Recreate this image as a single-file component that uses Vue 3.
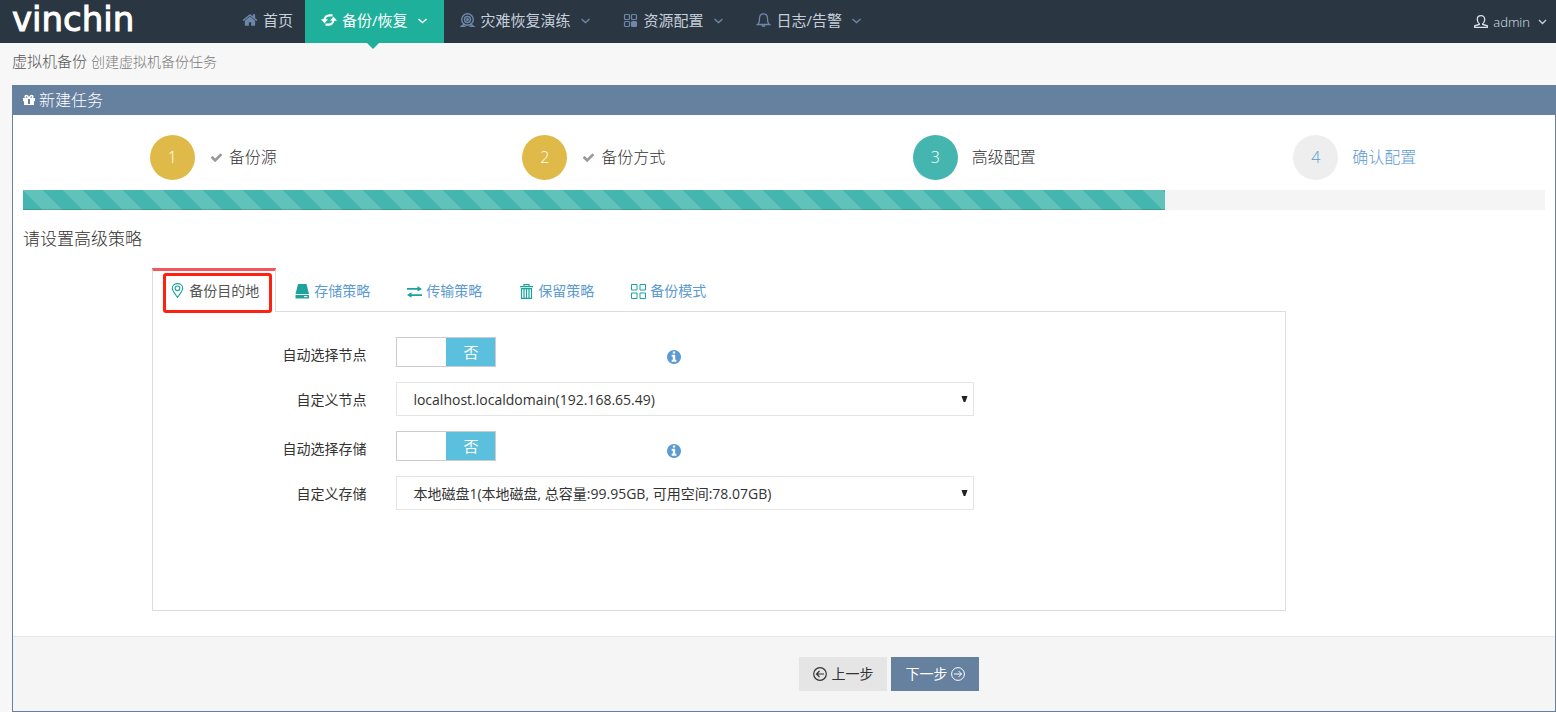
<script setup>
import { ref } from 'vue'

const menus = [
  { label: '首页', icon: 'home' },
  { label: '备份/恢复', icon: 'refresh', more: true, active: true },
  { label: '灾难恢复演练', icon: 'camera', more: true },
  { label: '资源配置', icon: 'blocks', more: true },
  { label: '日志/告警', icon: 'bell', more: true }
]

const steps = [
  { label: '备份源', state: 'done' },
  { label: '备份方式', state: 'done' },
  { label: '高级配置', state: 'active' },
  { label: '确认配置', state: 'todo' }
]
const progress = ref(75)

const tabs = [
  { label: '备份目的地', icon: 'pin' },
  { label: '存储策略', icon: 'disk' },
  { label: '传输策略', icon: 'transfer' },
  { label: '保留策略', icon: 'trash' },
  { label: '备份模式', icon: 'grid' }
]
const current = ref(0)

const autoNode = ref(false)
const autoStorage = ref(false)
</script>

<template>
  <div class="page">
    <header class="topbar">
      <a class="logo" href="#">vinchin</a>
      <nav class="menu">
        <a v-for="m in menus" :key="m.label" href="#" class="menu-item" :class="{ active: m.active }">
          <svg v-if="m.icon === 'home'" class="ico" viewBox="0 0 1792 1792"><path fill="currentColor" d="M1472 992v480q0 26-19 45t-45 19h-384v-384h-256v384h-384q-26 0-45-19t-19-45v-480q0-1 .5-3t.5-3l575-474 575 474q1 2 1 6zm223-69l-62 74q-8 9-21 11h-3q-13 0-21-7l-692-577-692 577q-12 8-24 7-13-2-21-11l-62-74q-8-10-7-23.5t11-21.5l719-599q32-26 76-26t76 26l244 204v-195q0-14 9-23t23-9h192q14 0 23 9t9 23v408l219 182q10 8 11 21.5t-7 23.5z" /></svg>
          <svg v-else-if="m.icon === 'refresh'" class="ico" viewBox="0 0 16 16" fill="none" stroke="currentColor" stroke-width="2.2"><path d="M3.500 8.500C3.500 5 6 3.400 8.600 3.400H11.500" /><path d="M12.500 7.500C12.500 11 10 12.600 7.400 12.600H4.500" /><path fill="currentColor" stroke="none" d="M0 7.200H7L3.500 11.500zM16 8.800H9L12.500 4.500z" /></svg>
          <svg v-else-if="m.icon === 'camera'" class="ico" viewBox="0 0 16 16" fill="none" stroke="currentColor" stroke-width="1.400"><circle cx="7.500" cy="7.500" r="5.800" /><circle cx="7.500" cy="7.500" r="3" /><circle cx="7.500" cy="7.500" r=".8" /><path d="M4 12.300L1.500 14.300H5.500M11 12.300L13.500 14.300H9.500" /></svg>
          <svg v-else-if="m.icon === 'blocks'" class="ico" viewBox="0 0 16 16" fill="none" stroke="currentColor" stroke-width="1.200"><rect x="1.500" y="2.500" width="5" height="5" rx="1" /><rect x="8.500" y="2.500" width="5" height="5" rx="1" /><rect x="1.500" y="9.500" width="5" height="5" rx="1" /><rect x="8.500" y="9.500" width="5" height="5" rx="1" fill="currentColor" /></svg>
          <svg v-else class="ico" viewBox="0 0 16 16" fill="none" stroke="currentColor" stroke-width="1.300"><path d="M1.500 12.500C3.300 11.300 3.500 10 3.500 6.500 3.500 3.500 5.100 1.800 7.500 1.800S11.500 3.500 11.500 6.500C11.500 10 11.700 11.300 13.500 12.500zM6 12.800C6 15 9 15 9 12.800" /></svg>
          <span>{{ m.label }}</span>
          <svg v-if="m.more" class="chev" viewBox="0 0 9 9"><path d="M.5 3l4 3.500 4-3.500" fill="none" stroke="currentColor" stroke-width="1.400" /></svg>
        </a>
      </nav>
      <button class="user" type="button">
        <svg class="user-ico" viewBox="0 0 16 16" fill="none" stroke="currentColor" stroke-width="1.300"><path d="M6.300 9.800C4.800 8.800 4.300 7.300 4.300 5.500 4.300 3 5.800 1.700 8 1.700S11.700 3 11.700 5.500C11.700 7.300 11.200 8.800 9.700 9.800V10.500L14.300 11.800V13.400H1.700V11.800L6.300 10.500z" /></svg>
        <span>admin</span>
        <svg class="chev" viewBox="0 0 9 9"><path d="M1 3l3.500 3.500L8 3" fill="none" stroke="currentColor" stroke-width="1.400" /></svg>
      </button>
    </header>

    <main class="content">
      <h1 class="title">虚拟机备份 <small>创建虚拟机备份任务</small></h1>

      <section class="portlet">
        <h2 class="portlet-head">
          <svg class="gift" viewBox="0 0 12 12" fill="currentColor"><path fill-rule="evenodd" d="M0 4h12v3.200h-1V11H1V7.200H0zM5 5v5h2V5z" /><path fill="none" stroke="currentColor" stroke-width="1.500" d="M5.500 4C5 2 4 1.400 3.200 1.400 1.800 1.400 1.800 3.800 3.200 3.800M6.500 4C7 2 8 1.400 8.800 1.400 10.200 1.400 10.200 3.800 8.800 3.800" /></svg>
          新建任务
        </h2>

        <div class="portlet-body">
          <ol class="steps">
            <li v-for="(s, i) in steps" :key="s.label">
              <a href="#" class="step" :class="s.state">
                <span class="number">{{ i + 1 }}</span>
                <svg v-if="s.state === 'done'" class="check" viewBox="0 0 1792 1792"><path fill="currentColor" d="M1671 566q0 40-28 68l-724 724-136 136q-28 28-68 28t-68-28l-136-136-362-362q-28-28-28-68t28-68l136-136q28-28 68-28t68 28l294 295 656-657q28-28 68-28t68 28l136 136q28 28 28 68z" /></svg>
                <span class="step-name">{{ s.label }}</span>
              </a>
            </li>
          </ol>
          <div class="progress" role="progressbar" :aria-valuenow="progress">
            <div class="bar" :style="{ width: progress + '%' }"></div>
          </div>
          <h3 class="subtitle">请设置高级策略</h3>

          <div class="tabbox">
            <div class="tabs" role="tablist">
              <button v-for="(t, i) in tabs" :key="t.label" type="button" role="tab" class="tab" :class="{ active: i === current }" :aria-selected="i === current" @click="current = i">
                <svg v-if="t.icon === 'pin'" class="tab-ico" viewBox="0 0 15 15" fill="none" stroke="currentColor" stroke-width="1.100"><path d="M7.500 14.500C5 10.500 2.300 8.200 2.300 5.300 2.300 2.500 4.600.6 7.500.6S12.700 2.500 12.700 5.300C12.700 8.200 10 10.500 7.500 14.500z" /><circle cx="7.500" cy="5.300" r="2.300" /></svg>
                <svg v-else-if="t.icon === 'disk'" class="tab-ico" viewBox="0 0 15 15" fill="currentColor"><path d="M3 0h8.500L14 10H.5zM.5 11H14v3.500H.5z" /><path d="M9 12.700h3.500" stroke="#fff" /></svg>
                <svg v-else-if="t.icon === 'transfer'" class="tab-ico" viewBox="0 0 15 15" fill="currentColor"><path d="M0 4h10.500V2L15 4.900 10.500 7.500V5.700H0zM15 10.300H4.500V8.300L0 11l4.500 2.800V12H15z" /></svg>
                <svg v-else-if="t.icon === 'trash'" class="tab-ico" viewBox="0 0 15 15" fill="none" stroke="currentColor" stroke-width="1.200"><path d="M1 2.600H14M5 2.500V.6H10V2.500M2.500 4.600H12.500V14.400H2.500zM5 5V14M7.500 5V14M10 5V14" /></svg>
                <svg v-else class="tab-ico" viewBox="0 0 15 15" fill="none" stroke="currentColor" stroke-width="1"><path d="M.5.5h5.500v5.500H.5zM9 .5h5.500v5.500H9zM.5 9h5.500v5.500H.5zM9 9h5.500v5.500H9z" /></svg>
                <span>{{ t.label }}</span>
                <i v-if="i === 0" class="marker"></i>
              </button>
            </div>

            <div class="panel" role="tabpanel">
              <div class="row">
                <label for="auto-node">自动选择节点</label>
                <div class="toggle-cell">
                  <span class="switch">
                    <input id="auto-node" v-model="autoNode" type="checkbox">
                    <span class="thumb" :class="{ on: autoNode }">{{ autoNode ? '是' : '否' }}</span>
                  </span>
                  <svg class="info" viewBox="128 128 1536 1536"><path fill="currentColor" d="M1152 1376v-160q0-14-9-23t-23-9h-96v-512q0-14-9-23t-23-9h-320q-14 0-23 9t-9 23v160q0 14 9 23t23 9h96v320h-96q-14 0-23 9t-9 23v160q0 14 9 23t23 9h448q14 0 23-9t9-23zm-128-896v-160q0-14-9-23t-23-9h-192q-14 0-23 9t-9 23v160q0 14 9 23t23 9h192q14 0 23-9t9-23zm640 416q0 209-103 385.500t-279.500 279.500-385.500 103-385.500-103-279.500-279.500-103-385.500 103-385.500 279.500-279.500 385.500-103 385.500 103 279.500 279.500 103 385.500z" /></svg>
                </div>
              </div>
              <div class="row">
                <label for="node">自定义节点</label>
                <div class="select">
                  <select id="node"><option>localhost.localdomain(192.168.65.49)</option></select>
                  <svg viewBox="0 0 7 7"><path d="M0 0h7L4.500 7h-2z" fill="#222" /></svg>
                </div>
              </div>
              <div class="row">
                <label for="auto-storage">自动选择存储</label>
                <div class="toggle-cell">
                  <span class="switch">
                    <input id="auto-storage" v-model="autoStorage" type="checkbox">
                    <span class="thumb" :class="{ on: autoStorage }">{{ autoStorage ? '是' : '否' }}</span>
                  </span>
                  <svg class="info" viewBox="128 128 1536 1536"><path fill="currentColor" d="M1152 1376v-160q0-14-9-23t-23-9h-96v-512q0-14-9-23t-23-9h-320q-14 0-23 9t-9 23v160q0 14 9 23t23 9h96v320h-96q-14 0-23 9t-9 23v160q0 14 9 23t23 9h448q14 0 23-9t9-23zm-128-896v-160q0-14-9-23t-23-9h-192q-14 0-23 9t-9 23v160q0 14 9 23t23 9h192q14 0 23-9t9-23zm640 416q0 209-103 385.500t-279.500 279.500-385.500 103-385.500-103-279.500-279.500-103-385.500 103-385.500 279.500-279.500 385.500-103 385.500 103 279.500 279.500 103 385.500z" /></svg>
                </div>
              </div>
              <div class="row">
                <label for="storage">自定义存储</label>
                <div class="select">
                  <select id="storage"><option>本地磁盘1(本地磁盘, 总容量:99.95GB, 可用空间:78.07GB)</option></select>
                  <svg viewBox="0 0 7 7"><path d="M0 0h7L4.500 7h-2z" fill="#222" /></svg>
                </div>
              </div>
            </div>
          </div>
        </div>

        <footer class="actions">
          <button type="button" class="btn prev">
            <svg viewBox="0 0 14 14" fill="none" stroke="currentColor" stroke-width="1.200"><circle cx="7" cy="7" r="6.300" /><path d="M11 7H3.500M6.500 4l-3 3 3 3" /></svg>
            上一步
          </button>
          <button type="button" class="btn next">
            下一步
            <svg viewBox="0 0 14 14" fill="none" stroke="currentColor" stroke-width="1"><circle cx="7" cy="7" r="6.400" /><path d="M3 7h7.500M7.500 4l3 3-3 3" /></svg>
          </button>
        </footer>
      </section>
    </main>
  </div>
</template>

<style>
body {
  background: #f7f7f7;
}
</style>

<style scoped>
.page {
  font-family: "Open Sans", "Noto Sans CJK SC", sans-serif;
  font-size: 14px;
  line-height: 20px;
  color: #333;
}
.page *,
.page *::after {
  box-sizing: border-box;
}
svg {
  flex: none;
  display: block;
}
a {
  color: inherit;
  text-decoration: none;
}
button,
select {
  font: inherit;
  color: inherit;
}
.topbar {
  display: flex;
  height: 43px;
  background: #2b3643;
}
.logo {
  width: 226px;
  padding-left: 12px;
  font-family: "DejaVu Sans", sans-serif;
  font-size: 34px;
  line-height: 38px;
  color: #fff;
  -webkit-text-stroke: 1px #fff;
}
.menu {
  display: flex;
}
.menu-item {
  position: relative;
  display: flex;
  align-items: center;
  padding: 0 17px 3px 16px;
  font-size: 15px;
  color: #c6cfda;
  white-space: nowrap;
}
.menu-item:first-child {
  padding-right: 12px;
}
.ico {
  width: 16px;
  height: 16px;
  margin-right: 5px;
  color: #6e87a8;
}
.chev {
  width: 9px;
  height: 9px;
  margin-left: 10px;
  color: #6e87a8;
}
.menu-item.active {
  background: #1fb09b;
  color: #fff;
}
.menu-item.active svg {
  color: #fff;
}
.menu-item.active::after {
  content: "";
  position: absolute;
  top: 100%;
  left: 50%;
  margin-left: -7px;
  border: 6px solid transparent;
  border-top-color: #1fb09b;
  border-bottom: 0;
}
.user {
  display: flex;
  align-items: center;
  margin-left: auto;
  padding: 0 9px 0 0;
  border: 0;
  background: none;
  font-size: 13px;
  font-weight: 300;
  color: #dbe1ea;
}
.user-ico {
  width: 16px;
  height: 16px;
  margin-right: 4px;
}
.user .chev {
  margin-left: 8px;
  color: #c6cfda;
}
.content {
  padding-left: 12px;
}
.title {
  margin: 0;
  padding: 8px 0 13px;
  font-size: 15px;
  font-weight: 300;
  color: #555;
}
.title small {
  font-size: 14px;
  color: #777;
}
.portlet {
  border: 1px solid #6680a0;
  background: #fff;
}
.portlet-head {
  display: flex;
  align-items: center;
  gap: 4px;
  height: 29px;
  margin: 0;
  padding: 0 10px 1px;
  background: #6680a0;
  color: #fff;
  font-size: 16px;
  font-weight: 300;
}
.gift {
  width: 12px;
  height: 12px;
}
.portlet-body {
  padding: 20px 10px 25px;
}
.steps {
  display: grid;
  grid-template-columns: repeat(4, 1fr);
  margin: 0 0 10px;
  padding: 0;
  list-style: none;
}
.step {
  display: flex;
  align-items: center;
  justify-content: center;
  font-size: 16px;
  font-weight: 300;
  color: #333;
}
.step-name {
  padding-bottom: 2px;
}
.number {
  width: 45px;
  height: 45px;
  margin-right: 14px;
  border-radius: 50%;
  background: #eee;
  line-height: 44px;
  text-align: center;
}
.done .number {
  background: #dfba49;
  color: #fff;
}
.active .number {
  background: #45b6af;
  color: #fff;
}
.step.todo {
  color: #5b9bd1;
}
.check {
  width: 13px;
  height: 13px;
  margin: 0 6px 0 1px;
  color: #999;
}
.progress {
  height: 20px;
  background: #f5f5f5;
}
.bar {
  height: 100%;
  background: #45b6af linear-gradient(45deg, rgba(255, 255, 255, .15) 25%, transparent 25%, transparent 50%, rgba(255, 255, 255, .15) 50%, rgba(255, 255, 255, .15) 75%, transparent 75%) 0 0 / 40px 40px;
  box-shadow: inset 0 -1px 0 rgba(0, 0, 0, .15);
}
.subtitle {
  margin: 19px 0;
  font-size: 17px;
  font-weight: 300;
  color: #333;
}
.tabbox {
  margin: 0 17% 0 8.5%;
}
.tabs {
  display: flex;
  gap: 1px;
}
.tab {
  position: relative;
  display: flex;
  align-items: center;
  gap: 4px;
  height: 43px;
  padding: 0 17px;
  border: 1px solid transparent;
  border-top-width: 3px;
  border-bottom: 0;
  background: none;
  color: #5b9bd1;
  white-space: nowrap;
}
.tab.active {
  height: 44px;
  margin-bottom: -1px;
  padding: 0 16px 2px 17px;
  border-color: #f3565d #ddd;
  background: #fff;
  color: #555;
}
.tab-ico {
  width: 15px;
  height: 15px;
  color: #1ba39c;
}
.marker {
  position: absolute;
  inset: 2px 3px -1px 10px;
  border: 3px solid #ff2010;
  border-radius: 3px;
}
.panel {
  display: flex;
  flex-direction: column;
  gap: 15px;
  min-height: 300px;
  padding-top: 25px;
  border: 1px solid #ddd;
}
.row {
  display: grid;
  grid-template-columns: 19% 51%;
  column-gap: 28px;
}
.row > label {
  height: 28px;
  padding: 8px 2px 0 0;
  text-align: right;
}
.toggle-cell {
  display: grid;
  grid-template-columns: 46.8% auto;
  height: 30px;
}
.switch {
  position: relative;
  display: flex;
  justify-content: flex-end;
  width: 100px;
  height: 30px;
  border: 1px solid #ccc;
  background: #fff;
}
.switch input {
  position: absolute;
  inset: 0;
  width: 100%;
  height: 100%;
  margin: 0;
  opacity: 0;
}
.thumb {
  width: 49px;
  background: #5bc0de;
  color: #fff;
  font-size: 15px;
  line-height: 28px;
  text-align: center;
}
.thumb.on {
  margin-right: auto;
}
.info {
  width: 14px;
  height: 14px;
  margin-top: 13px;
  color: #5b9bd1;
}
.select {
  position: relative;
}
.select select {
  display: block;
  width: 100%;
  height: 34px;
  padding: 1px 24px 0 16px;
  border: 1px solid #e5e5e5;
  border-radius: 0;
  background: #fff;
  appearance: none;
}
.select svg {
  position: absolute;
  top: 14px;
  right: 6px;
  width: 7px;
  height: 6px;
  pointer-events: none;
}
.actions {
  display: flex;
  gap: 4px;
  padding: 20px 0 20px 51%;
  border-top: 1px solid #e5e5e5;
  background: #f5f5f5;
}
.btn {
  display: flex;
  align-items: center;
  gap: 4px;
  height: 34px;
  padding: 0 14px;
  border: 0;
  background: #e5e5e5;
  color: #333;
  white-space: nowrap;
}
.btn svg {
  width: 14px;
  height: 14px;
}
.btn.next {
  background: #6680a0;
  color: #fff;
}
</style>
